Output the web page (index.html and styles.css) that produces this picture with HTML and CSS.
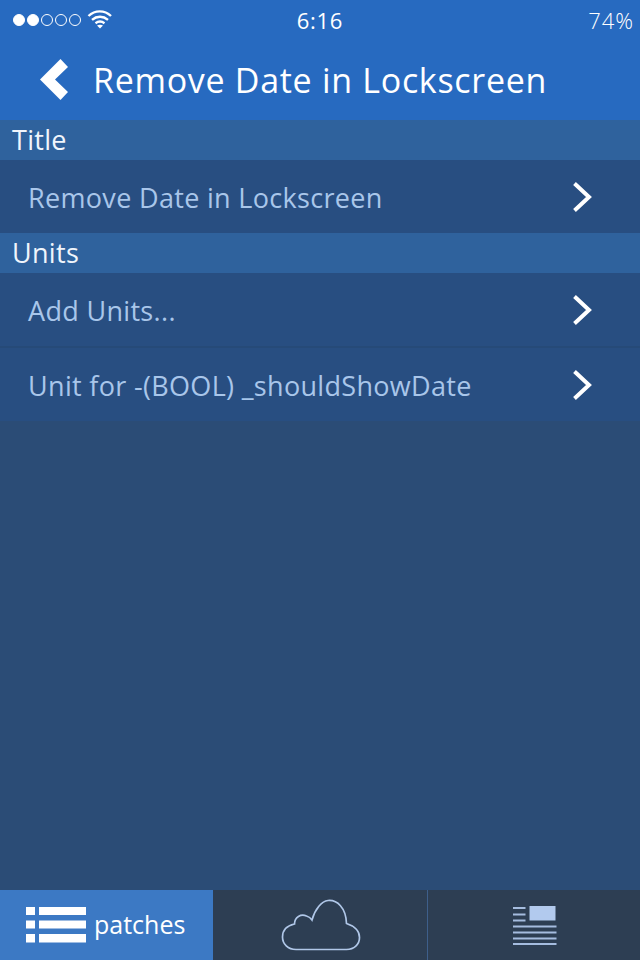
FILE: index.html
```html
<!DOCTYPE html>
<html lang="en">
<head>
<meta charset="utf-8">
<title>Remove Date in Lockscreen</title>
<link rel="stylesheet" href="styles.css">
</head>
<body>
<div class="screen">
  <header class="top">
    <div class="status">
      <div class="status-left">
        <span class="dot on"></span><span class="dot on"></span><span class="dot"></span><span class="dot"></span><span class="dot"></span>
        <svg class="wifi" width="26" height="20" viewBox="0 0 26 20"><path d="M1.500 7C8 .8 17.500 .8 24 7M5 10.800c4.800-4 11.200-4 16 0M8.500 14.200c2.800-2 6.200-2 9 0" fill="none" stroke="#fff" stroke-width="2.400"/><path d="M10 16.500c2-1.100 4-1.100 6 0L13 19.500z" fill="#fff"/></svg>
      </div>
      <div class="time">6:16</div>
      <div class="battery">74%</div>
    </div>
    <div class="nav">
      <svg class="back" width="30" height="44" viewBox="0 0 30 44"><path d="M20.500 1 28 9 15 21.500 28 34 20.500 42 0 21.500z" fill="#fff"/></svg>
      <h1 class="nav-title">Remove Date in Lockscreen</h1>
    </div>
  </header>
  <main class="content">
    <div class="section">Title</div>
    <div class="row row-single"><span class="row-label">Remove Date in Lockscreen</span><svg class="chev" width="22" height="32" viewBox="0 0 22 32"><path d="M2.500 2.500 17 16 2.500 29.500" fill="none" stroke="#fff" stroke-width="4"/></svg></div>
    <div class="section">Units</div>
    <div class="row row-sep"><span class="row-label">Add Units...</span><svg class="chev" width="22" height="32" viewBox="0 0 22 32"><path d="M2.500 2.500 17 16 2.500 29.500" fill="none" stroke="#fff" stroke-width="4"/></svg></div>
    <div class="row row-last"><span class="row-label">Unit for -(BOOL) _shouldShowDate</span><svg class="chev" width="22" height="32" viewBox="0 0 22 32"><path d="M2.500 2.500 17 16 2.500 29.500" fill="none" stroke="#fff" stroke-width="4"/></svg></div>
  </main>
  <nav class="tabs">
    <div class="tab tab-active">
      <svg width="60" height="36" viewBox="0 0 60 36"><path d="M0 0h9v8H0zM13 0h47v8H13zM0 13.500h9v8H0zM13 13.500h47v8H13zM0 27h9v8.500H0zM13 27h47v8.500H13z" fill="#fff"/></svg>
      <span class="tab-label">patches</span>
    </div>
    <div class="tab tab-cloud">
      <svg class="cloud" width="80" height="52" viewBox="0 0 80 52"><path d="M15 50.500C7 50.500 1.500 45 1.500 38c0-7 5-11.500 12-13 0-7 6.500-10.500 12-8 3.500 1 5.500 4 5.500 4C34 10 41 2 47 1.500c9-.8 18 7 18.500 23 7.500 2.500 13 7 13 14 0 7-5.500 12-13 12z" fill="none" stroke="#b0c7e8" stroke-width="1.700"/></svg>
    </div>
    <div class="tab tab-news">
      <svg class="news" width="44" height="40" viewBox="0 0 44 40"><path d="M0 2h12.500v2H0zM0 8.500h12.500v2H0zM0 14.500h12.500v2H0zM0 20.500h43.500v2H0zM0 26.500h43.500v2H0zM0 32.500h43.500v2H0zM0 38h43.500v2H0z" fill="#a5bcdf"/><path d="M16.500 1h26v14.500h-26z" fill="#b2caee"/></svg>
    </div>
  </nav>
</div>
</body>
</html>
```
FILE: styles.css
```css
* { box-sizing: border-box; }
html, body { margin: 0; padding: 0; }
body { font-family: "Open Sans", "Noto Sans", sans-serif; background: #2b4c76; }
.screen { width: 640px; height: 960px; display: flex; flex-direction: column; background: #2b4c76; overflow: hidden; }
.top { background: #276ac0; height: 120px; color: #fff; flex: none; }
.status { height: 40px; display: grid; grid-template-columns: 1fr auto 1fr; align-items: center; padding: 0 6px; }
.status-left { display: flex; align-items: center; gap: 2px; padding-left: 7px; }
.dot { width: 12px; height: 12px; border-radius: 50%; border: 1px solid #fff; }
.dot.on { background: #fff; }
.wifi { margin-left: 4px; margin-top: -3px; }
.time { font-size: 22px; line-height: 40px; letter-spacing: 0.700px; }
.battery { font-size: 22px; line-height: 40px; text-align: right; letter-spacing: 1px; font-weight: 300; }
.nav { height: 80px; display: flex; align-items: center; padding-left: 40px; gap: 23px; }
.back { flex: none; }
.nav-title { margin: 0; font-size: 34px; font-weight: 400; letter-spacing: 0.700px; }
.content { flex: 1; }
.section { height: 40px; background: #2f629d; color: #f0f5fc; font-size: 27px; line-height: 40px; padding-left: 12px; letter-spacing: 0.300px; }
.row { display: flex; align-items: center; justify-content: space-between; background: #284e81; color: #a9c6ea; font-size: 27px; letter-spacing: 0.320px; padding: 0 46px 0 28px; }
.row-label { padding-top: 2px; }
.row-single { height: 73px; }
.row-sep { height: 75px; border-bottom: 2px solid #264a78; }
.row-last { height: 73px; }
.chev { flex: none; }
.tabs { height: 70px; flex: none; display: grid; grid-template-columns: 213px 214px 213px; background: #2d3e53; }
.tab { display: flex; align-items: center; justify-content: center; }
.tab-active { background: #3c79c4; color: #fff; font-size: 25px; line-height: 1; gap: 8px; justify-content: flex-start; padding-left: 26px; }
.tab-label { padding-bottom: 2px; }
.tab-news { border-left: 1px solid #3e5f8b; }
.cloud { margin-left: 2px; }
.news { margin-left: 2px; }
```
